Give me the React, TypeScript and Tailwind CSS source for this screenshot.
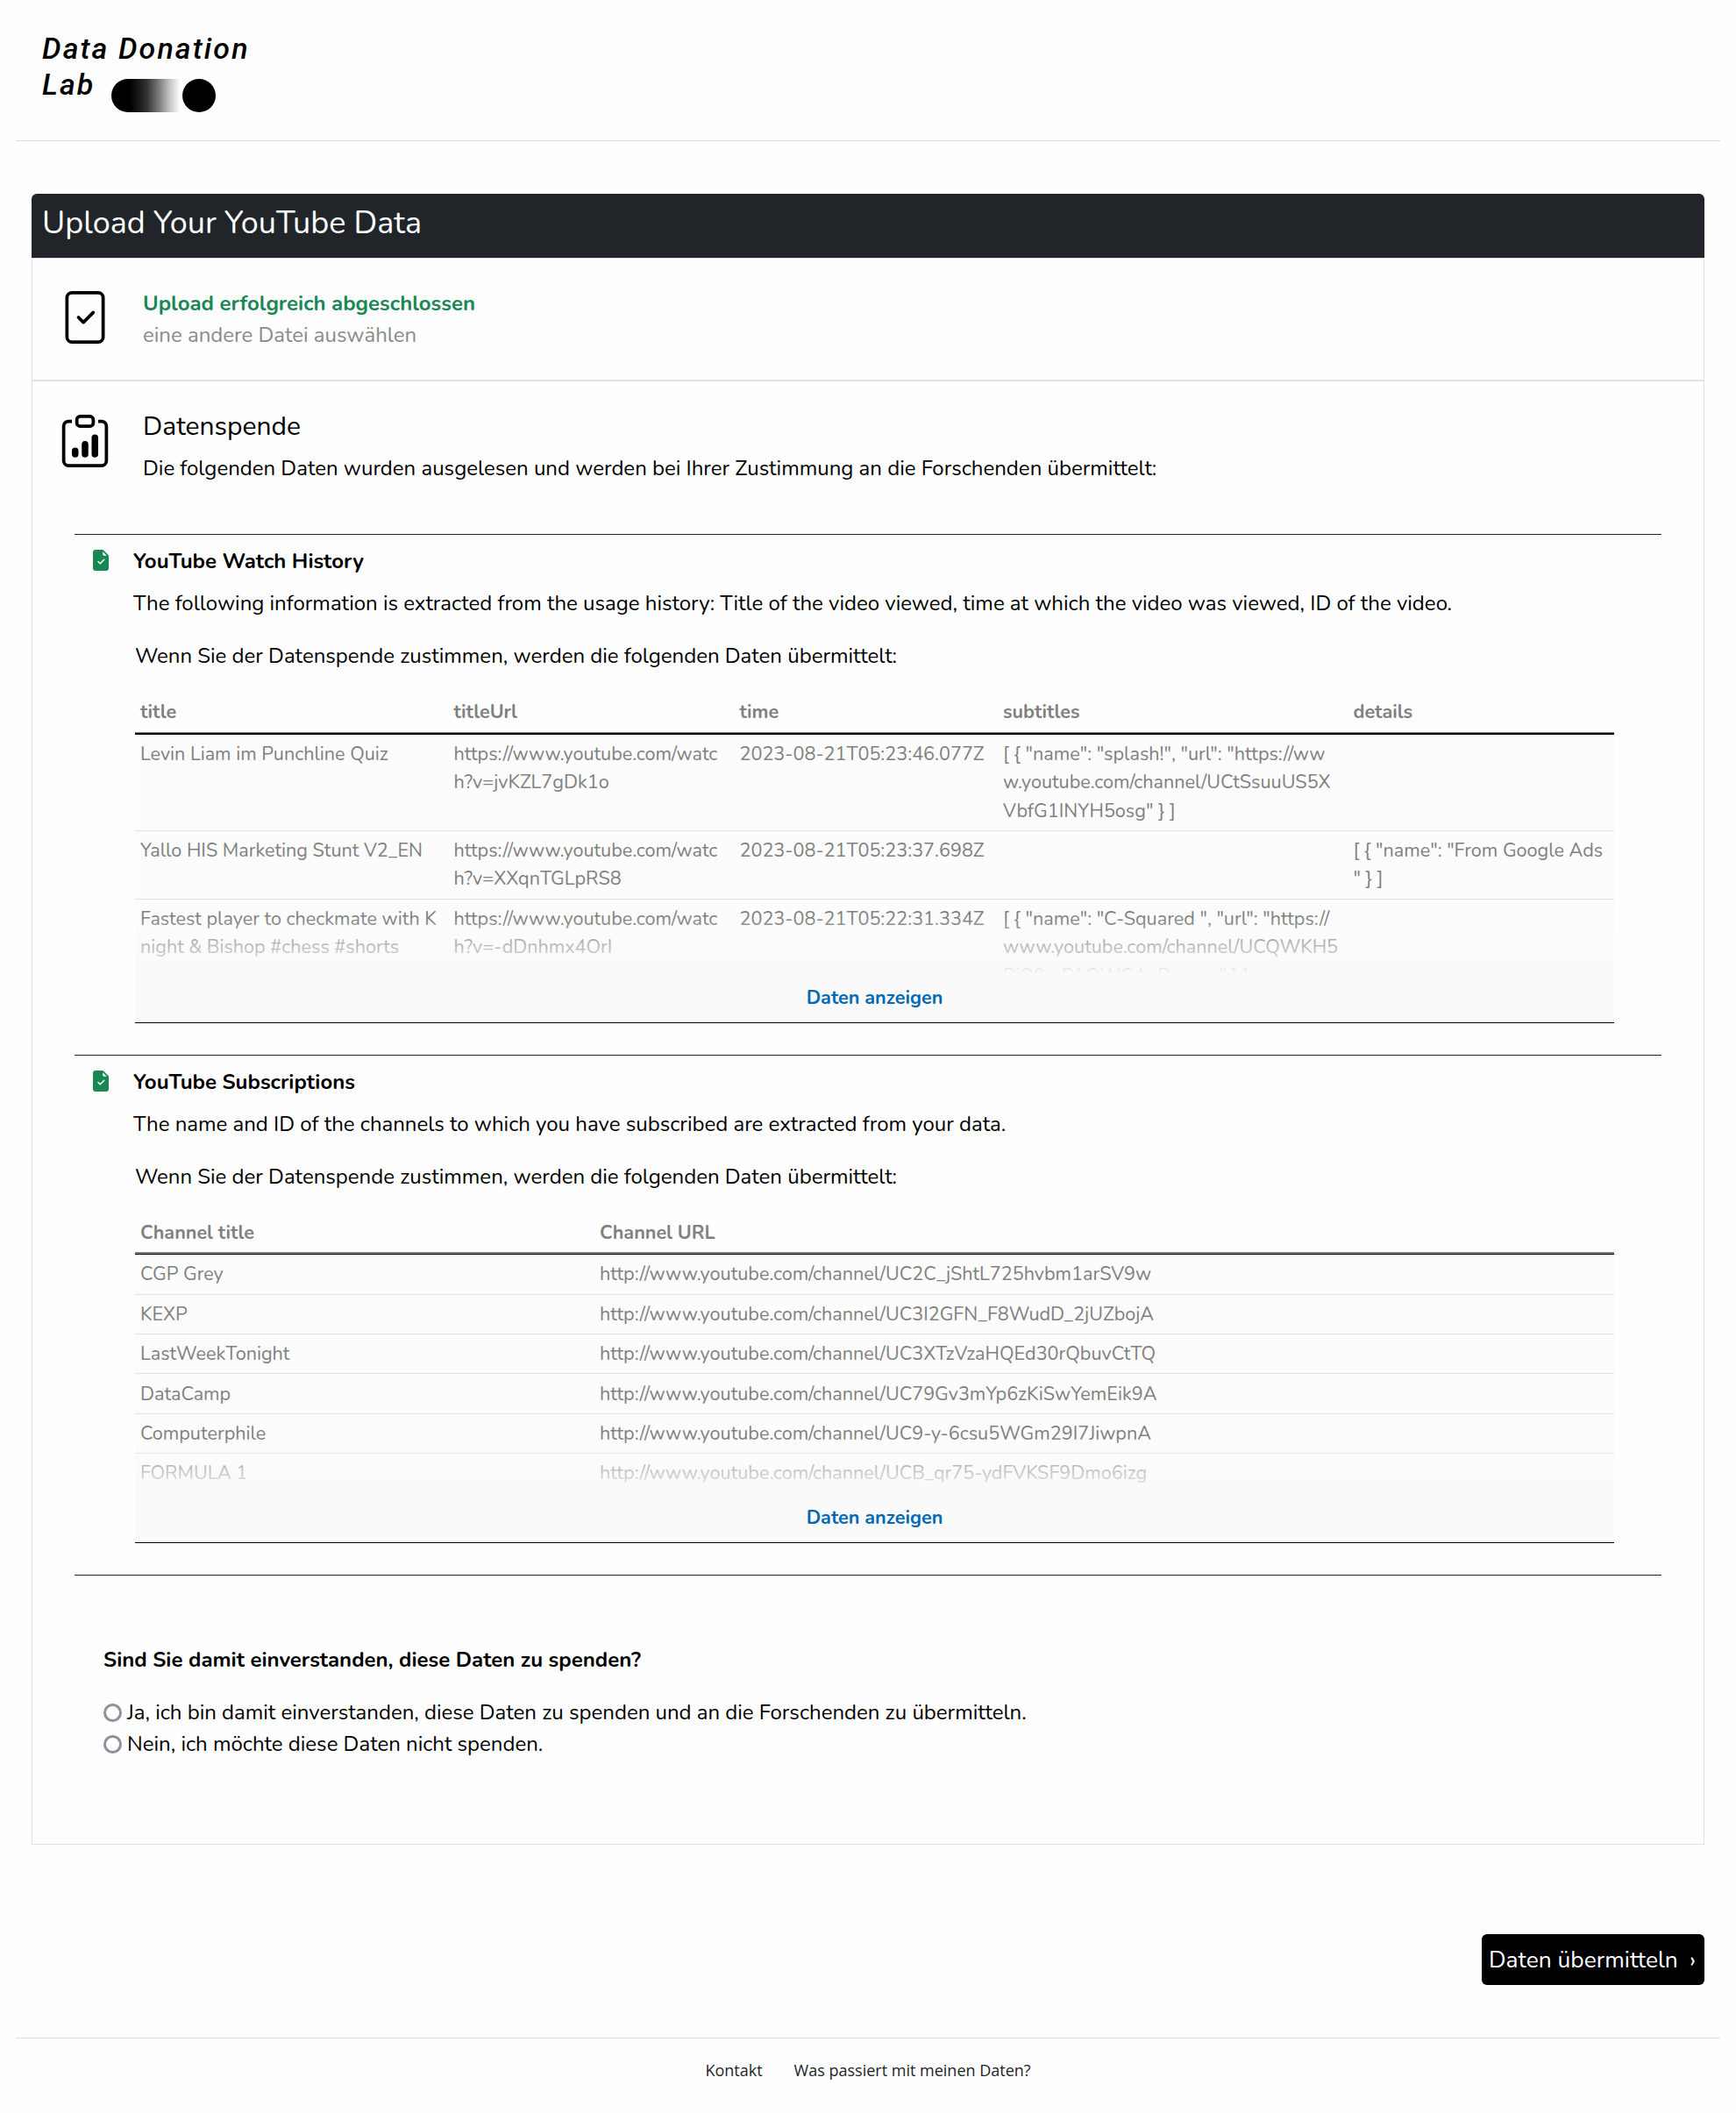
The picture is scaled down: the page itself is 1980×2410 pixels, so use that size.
import type { ReactNode } from "react";
import { BsClipboardData, BsFileCheck, BsFileEarmarkCheckFill } from "react-icons/bs";

const historyRows = [
  {
    height: "h-[110px]",
    cells: [
      "Levin Liam im Punchline Quiz",
      "https://www.youtube.com/watch?v=jvKZL7gDk1o",
      "2023-08-21T05:23:46.077Z",
      '[ { "name": "splash!", "url": "https://www.youtube.com/channel/UCtSsuuUS5XVbfG1INYH5osg" } ]',
      "",
    ],
  },
  {
    height: "h-[78px]",
    cells: [
      "Yallo HIS Marketing Stunt V2_EN",
      "https://www.youtube.com/watch?v=XXqnTGLpRS8",
      "2023-08-21T05:23:37.698Z",
      "",
      '[ { "name": "From Google Ads\n" } ]',
    ],
  },
  {
    height: "h-[110px]",
    cells: [
      "Fastest player to checkmate with Knight & Bishop #chess #shorts",
      "https://www.youtube.com/watch?v=-dDnhmx4OrI",
      "2023-08-21T05:22:31.334Z",
      '[ { "name": "C-Squared ", "url": "https://www.youtube.com/channel/UCQWKH5PjO9srPAOWGA_Rsxesg" } ]',
      "",
    ],
  },
];

const channelRows = [
  { height: "h-[46px]", cells: ["CGP Grey", "http://www.youtube.com/channel/UC2C_jShtL725hvbm1arSV9w"] },
  { height: "h-[45px]", cells: ["KEXP", "http://www.youtube.com/channel/UC3I2GFN_F8WudD_2jUZbojA"] },
  { height: "h-[45px]", cells: ["LastWeekTonight", "http://www.youtube.com/channel/UC3XTzVzaHQEd30rQbuvCtTQ"] },
  { height: "h-[46px] pt-px", cells: ["DataCamp", "http://www.youtube.com/channel/UC79Gv3mYp6zKiSwYemEik9A"] },
  { height: "h-[45px]", cells: ["Computerphile", "http://www.youtube.com/channel/UC9-y-6csu5WGm29I7JiwpnA"] },
  { height: "h-[46px]", cells: ["FORMULA 1", "http://www.youtube.com/channel/UCB_qr75-ydFVKSF9Dmo6izg"] },
];

function Logo() {
  return (
    <div className="font-['Roboto',sans-serif] text-[34px] leading-[41px] font-medium tracking-[2.1px] text-black italic">
      <div>Data Donation</div>
      <div className="flex items-start">
        <span className="w-[79px]">Lab</span>
        <div className="mt-[14px] flex h-[38px] w-[119px] justify-end rounded-full bg-[linear-gradient(90deg,#000_18%,#333_34%,#777_45%,#ccc_57%,#fefefe_66%)]">
          <div className="size-[38px] rounded-full bg-black" />
        </div>
      </div>
    </div>
  );
}

type TableProps = {
  columns: string;
  headings: string[];
  headClass: string;
  bodyClass: string;
  rows: { height: string; cells: string[] }[];
};

function PreviewTable({ columns, headings, headClass, bodyClass, rows }: TableProps) {
  return (
    <div className="mt-[23px] ml-[2px] w-[1687px] text-[21.6px] leading-[32.4px] text-[#808080]">
      <div className={`grid border-[#808080] ${columns} ${headClass}`}>
        {headings.map((h) => (
          <div key={h} className="px-[6px] pt-[7px] font-bold">{h}</div>
        ))}
      </div>
      <div className={`relative overflow-hidden border-b border-black bg-[#fcfcfc] ${bodyClass}`}>
        {rows.map((row) => (
          <div key={row.cells[0]} className={`grid border-b border-[#dee2e6] ${columns} ${row.height}`}>
            {row.cells.map((cell, i) => (
              <div key={i} className="px-[6px] pt-[6px] break-all whitespace-pre-line">{cell}</div>
            ))}
          </div>
        ))}
        <div className="absolute inset-x-0 bottom-0">
          <div className="h-[63px] bg-linear-to-b from-[#fafafa]/0 to-[#fafafa]/92" />
          <div className="h-[57px] bg-[#fafafa] pt-[13px] text-center font-bold text-[#0069b4]">Daten anzeigen</div>
        </div>
      </div>
    </div>
  );
}

function Blueprint({ title, text, className, children }: { title: string; text: string; className: string; children: ReactNode }) {
  return (
    <section className={`mx-12 flex border-t border-[#212529] ${className}`}>
      <BsFileEarmarkCheckFill className="mt-[17px] mr-[25px] ml-[18px] size-6 shrink-0 text-[#198754]" />
      <div className="pt-3">
        <h3 className="font-bold">{title}</h3>
        <p className="mt-3">{text}</p>
        <p className="mt-6 ml-[2px]">Wenn Sie der Datenspende zustimmen, werden die folgenden Daten übermittelt:</p>
        {children}
      </div>
    </section>
  );
}

function Choice({ label }: { label: string }) {
  return (
    <label className="flex items-center gap-[6px]">
      <span className="mt-px size-[21px] rounded-full border-3 border-[#8f8f9d] bg-white" />
      {label}
    </label>
  );
}

export default function App() {
  return (
    <div className="flex h-[2410px] w-[1980px] flex-col bg-[#fefefe] px-[18px] font-['Nunito',sans-serif] text-[24px] leading-9 text-black">
      <header className="h-[161px] shrink-0 border-b border-[#dcdcdc] pt-[35px] pl-[30px]">
        <Logo />
      </header>

      <main className="mx-[18px] mt-[60px]">
        <h1 className="h-[73px] rounded-t-[6px] bg-[#212529] pt-3 pl-3 text-[36px] leading-[43px] text-white">Upload Your YouTube Data</h1>

        <div className="h-[1810px] border border-[#dee2e6]">
          <section className="flex h-[140px] border-b-2 border-[#dee2e6] pl-[30px]">
            <BsFileCheck className="mt-[37px] size-[60px] shrink-0" />
            <div className="mt-[33px] ml-[36px]">
              <p className="font-bold text-[#198754]">Upload erfolgreich abgeschlossen</p>
              <p className="text-[#888c88]">eine andere Datei auswählen</p>
            </div>
          </section>

          <section className="flex h-[174px] pl-[30px]">
            <BsClipboardData className="mt-[38px] size-[60px] shrink-0" />
            <div className="mt-[34px] ml-[36px]">
              <h2 className="text-[30px]">Datenspende</h2>
              <p className="mt-[11px]">Die folgenden Daten wurden ausgelesen und werden bei Ihrer Zustimmung an die Forschenden übermittelt:</p>
            </div>
          </section>

          <Blueprint
            className="h-[594px]"
            title="YouTube Watch History"
            text="The following information is extracted from the usage history: Title of the video viewed, time at which the video was viewed, ID of the video."
          >
            <PreviewTable
              columns="grid-cols-[357.5px_326px_300.5px_399.5px_304px]"
              headings={["title", "titleUrl", "time", "subtitles", "details"]}
              headClass="h-[47px] border-b"
              bodyClass="h-[331px] border-t-2"
              rows={historyRows}
            />
          </Blueprint>

          <Blueprint
            className="h-[594px] border-b"
            title="YouTube Subscriptions"
            text="The name and ID of the channels to which you have subscribed are extracted from your data."
          >
            <PreviewTable
              columns="grid-cols-[524px_1163px]"
              headings={["Channel title", "Channel URL"]}
              headClass="h-[47px] border-b-2"
              bodyClass="h-[330px] border-t"
              rows={channelRows}
            />
          </Blueprint>

          <section className="mt-[78px] ml-[81px]">
            <p className="mb-6 font-bold">Sind Sie damit einverstanden, diese Daten zu spenden?</p>
            <Choice label="Ja, ich bin damit einverstanden, diese Daten zu spenden und an die Forschenden zu übermitteln." />
            <Choice label="Nein, ich möchte diese Daten nicht spenden." />
          </section>
        </div>

        <div className="mt-[102px] flex justify-end">
          <button className="h-[58px] w-[254px] rounded-[6px] bg-black pl-2 text-left text-[26.4px] whitespace-pre text-white">{"Daten übermitteln  ›"}</button>
        </div>
      </main>

      <footer className="mt-[60px] flex justify-center gap-9 border-t border-[#dcdcdc] pt-[23px] font-['Open_Sans',sans-serif] text-[18px] leading-[27px] text-[#212529]">
        <span>Kontakt</span>
        <span>Was passiert mit meinen Daten?</span>
      </footer>
    </div>
  );
}
